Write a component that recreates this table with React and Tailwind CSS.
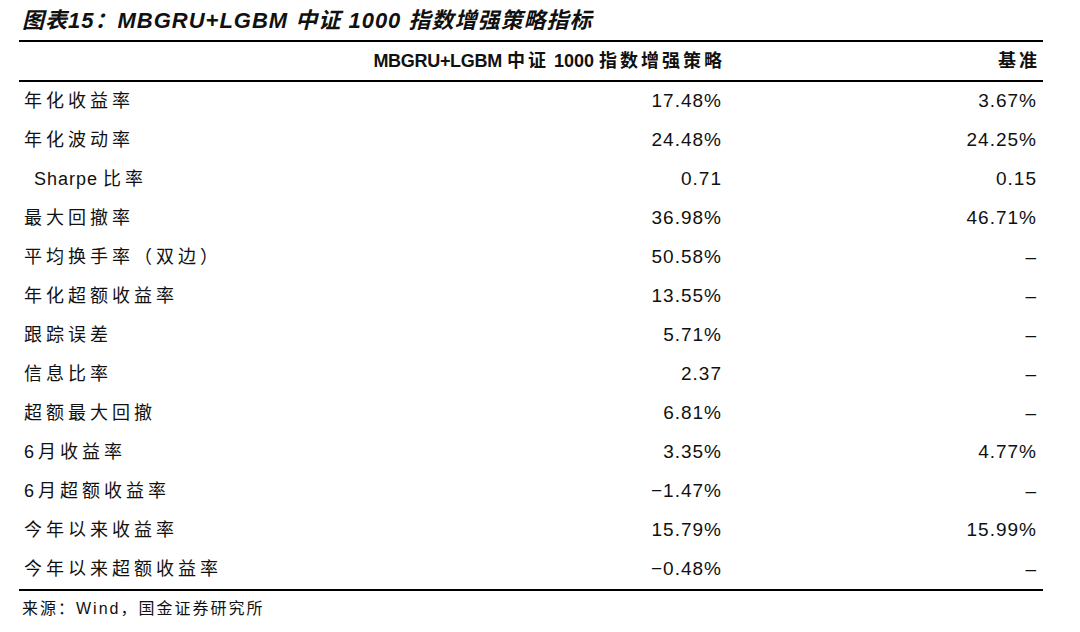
import React from "react";

const rows = [
  ["年化收益率", "17.48%", "3.67%"],
  ["年化波动率", "24.48%", "24.25%"],
  ["SHARPE", "0.71", "0.15"],
  ["最大回撤率", "36.98%", "46.71%"],
  ["平均换手率（双边）", "50.58%", "–"],
  ["年化超额收益率", "13.55%", "–"],
  ["跟踪误差", "5.71%", "–"],
  ["信息比率", "2.37", "–"],
  ["超额最大回撤", "6.81%", "–"],
  ["6月收益率", "3.35%", "4.77%"],
  ["6月超额收益率", "−1.47%", "–"],
  ["今年以来收益率", "15.79%", "15.99%"],
  ["今年以来超额收益率", "−0.48%", "–"],
];

const cjk = { fontFamily: '"Liberation Sans", "Noto Sans CJK SC", sans-serif' };
const num = { fontFamily: '"Liberation Sans", sans-serif' };

export default function App() {
  return (
    <div className="w-[1080px] h-[632px] bg-white text-[#111]" style={cjk}>
      <div className="pl-[22px] h-[40px] flex items-center">
        <span className="text-[22px] font-bold italic tracking-[1px]">图表15：MBGRU+LGBM 中证 1000 指数增强策略指标</span>
      </div>
      <div className="ml-[19px] w-[1024px]">
        <div className="h-[2px] bg-black" />
        <div className="grid grid-cols-[300px_408px_316px] h-[38px] items-center text-[18px] font-bold">
          <div />
          <div className="text-right pr-[2px] whitespace-nowrap">
            <span className="text-[18px] tracking-[-0.3px]" style={num}>MBGRU+LGBM</span>{" "}
            <span className="tracking-[3px]">中证</span>{" "}
            <span className="text-[18px]" style={num}>1000</span>{" "}
            <span className="tracking-[3px]">指数增强策略</span>
          </div>
          <div className="text-right pr-[3px] tracking-[3px]">基准</div>
        </div>
        <div className="h-[2px] bg-black" />
        {rows.map((r, i) => (
          <div key={i} className="grid grid-cols-[300px_408px_316px] h-[39px] items-center text-[18px]">
            {r[0] === "SHARPE" ? (
              <div className="pl-[15px] whitespace-pre">
                <span className="tracking-[1px]" style={num}>Sharpe</span>{" "}
                <span className="tracking-[4px]">比率</span>
              </div>
            ) : (
              <div className="pl-[5px] tracking-[4px] whitespace-pre">{r[0]}</div>
            )}
            <div className="text-right pr-[5px] text-[19px] tracking-[1px]" style={num}>{r[1]}</div>
            <div className="text-right pr-[6px] text-[19px] tracking-[1px]" style={num}>{r[2]}</div>
          </div>
        ))}
        <div className="h-[2px] bg-black" />
      </div>
      <div className="pl-[22px] h-[36px] flex items-center text-[16px] tracking-[2px]">来源：Wind，国金证券研究所</div>
    </div>
  );
}
